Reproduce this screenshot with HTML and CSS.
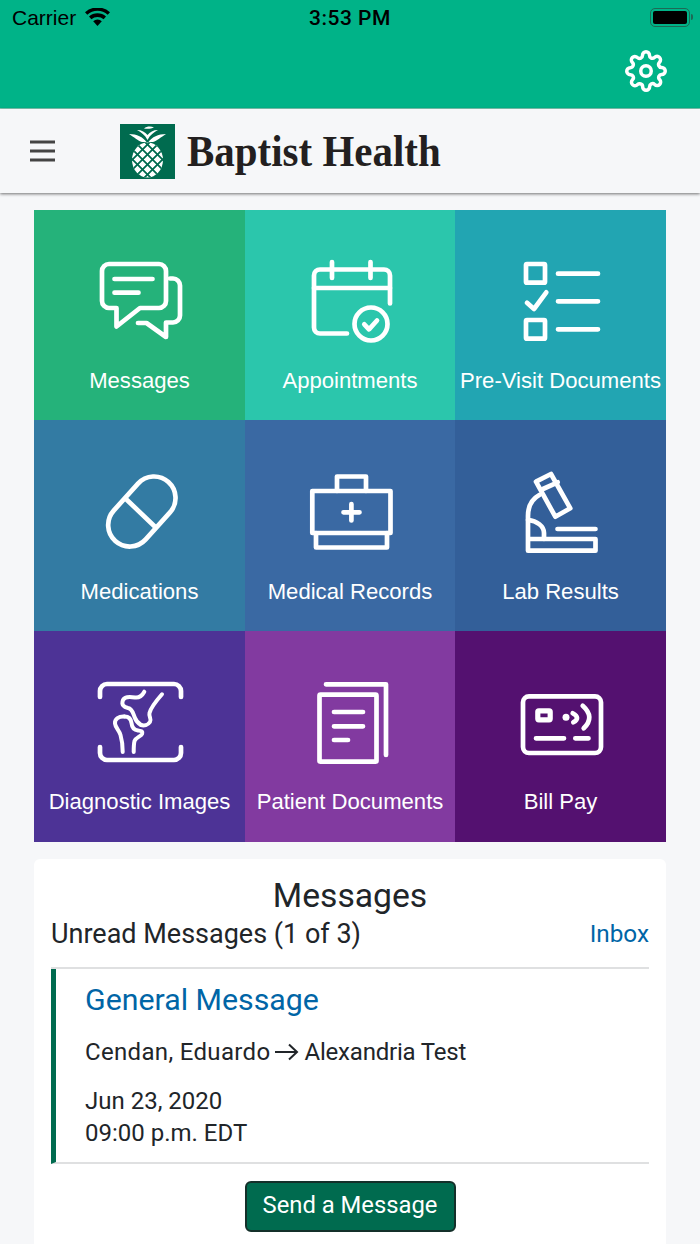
FILE: index.html
```html
<!DOCTYPE html>
<html>
<head>
    <title>Baptist Health</title>
    <link rel="stylesheet" href="styles.css">
</head>
<body>
    <header class="topbar">
        <div class="status">
            <div class="status-left">
                <span class="carrier">Carrier</span>
                <svg class="wifi" viewBox="0 0 25 18"><path d="M12.5 18 L8.2 13.2 A6.6 6.6 0 0 1 16.8 13.2 Z"/><path d="M6.4 11.2 L4 8.6 A12.6 12.6 0 0 1 21 8.6 L18.6 11.2 A9.2 9.2 0 0 0 6.4 11.2 Z"/><path d="M2.3 6.8 L0 4.3 A18.5 18.5 0 0 1 25 4.3 L22.7 6.8 A15.2 15.2 0 0 0 2.3 6.8 Z"/></svg>
            </div>
            <span class="clock">3:53 PM</span>
            <div class="battery"><div class="battery-fill"></div></div>
        </div>
        <div class="tools">
            <svg class="gear" viewBox="0 0 24 24"><circle cx="12" cy="12" r="3"/><path d="M19.4 15a1.65 1.65 0 0 0 .33 1.82l.06.06a2 2 0 0 1 0 2.83 2 2 0 0 1-2.83 0l-.06-.06a1.65 1.65 0 0 0-1.82-.33 1.65 1.65 0 0 0-1 1.51V21a2 2 0 0 1-2 2 2 2 0 0 1-2-2v-.09A1.65 1.65 0 0 0 9 19.4a1.65 1.65 0 0 0-1.82.33l-.06.06a2 2 0 0 1-2.83 0 2 2 0 0 1 0-2.83l.06-.06a1.65 1.65 0 0 0 .33-1.82 1.65 1.65 0 0 0-1.51-1H3a2 2 0 0 1-2-2 2 2 0 0 1 2-2h.09A1.65 1.65 0 0 0 4.6 9a1.65 1.65 0 0 0-.33-1.82l-.06-.06a2 2 0 0 1 0-2.83 2 2 0 0 1 2.83 0l.06.06a1.65 1.65 0 0 0 1.82.33H9a1.65 1.65 0 0 0 1-1.51V3a2 2 0 0 1 2-2 2 2 0 0 1 2 2v.09a1.65 1.65 0 0 0 1 1.51 1.65 1.65 0 0 0 1.82-.33l.06-.06a2 2 0 0 1 2.83 0 2 2 0 0 1 0 2.83l-.06.06a1.65 1.65 0 0 0-.33 1.82V9a1.65 1.65 0 0 0 1.51 1H21a2 2 0 0 1 2 2 2 2 0 0 1-2 2h-.09a1.65 1.65 0 0 0-1.51 1z"/></svg>
        </div>
    </header>

    <nav class="navbar">
        <svg class="burger" viewBox="0 0 25 22"><path d="M0 2 H25 M0 11 H25 M0 20 H25"/></svg>
        <svg class="logo-mark" viewBox="0 0 55 55">
            <clipPath id="fruit"><ellipse cx="27.5" cy="36" rx="15.5" ry="17.5"/></clipPath>
            <rect width="55" height="55" fill="#006b4f"/>
            <ellipse cx="27.5" cy="36" rx="15.5" ry="17.5" fill="#fff"/>
            <g clip-path="url(#fruit)" stroke="#006b4f" stroke-width="1.8">
                <path d="M4 27 L34 57 M4 17 L44 57 M12 15 L52 55 M22 15 L52 45"/>
                <path d="M51 27 L21 57 M51 17 L11 57 M43 15 L3 55 M33 15 L3 45"/>
            </g>
            <path fill="#fff" d="M26.5 18 C23 13 17 10 9 10 C14 13 18 17 22 18 Z M28.5 18 C32 13 38 10 46 10 C41 13 37 17 33 18 Z M27.5 16 C25 11 21 8 17 6 C22 6 25 8 27.5 11 C30 8 33 6 38 6 C34 8 30 11 27.5 16 Z M24 4.5 C27 2 31 2 34 3.5 C31 5 27 5 24 4.5 Z"/>
        </svg>
        <span class="logo-text">Baptist Health</span>
    </nav>

    <main class="content">
        <section class="tiles">
            <a class="tile t-messages">
                <svg class="icon" viewBox="50 45 110 110">
                    <path d="M81.5 98 H74 a7 7 0 0 1 -7 -7 V61 a7 7 0 0 1 7 -7 H124 a7 7 0 0 1 7 7 V91 a7 7 0 0 1 -7 7 H105 L81.5 116.5 Z"/>
                    <path d="M79.5 69 H117.5 M79.5 82.7 H103.5"/>
                    <path d="M135 68.5 h3 a7 7 0 0 1 7 7 V105.5 a7 7 0 0 1 -7 7 h-7 V127 L111.5 113 H103"/>
                </svg>
                <span class="tile-label">Messages</span>
            </a>
            <a class="tile t-appts">
                <svg class="icon" viewBox="50 45 110 110">
                    <path d="M102 123.5 H75 a6 6 0 0 1 -6 -6 V65.5 a6 6 0 0 1 6 -6 H139 a6 6 0 0 1 6 6 V93.5"/>
                    <path d="M69 78 H145 M87 52 V68 M125.5 52 V68"/>
                    <circle cx="126" cy="114" r="16.5"/>
                    <path d="M119.3 114.3 L124 119.3 L132 110.5"/>
                </svg>
                <span class="tile-label">Appointments</span>
            </a>
            <a class="tile t-previsit">
                <svg class="icon" viewBox="50 45 110 110">
                    <rect x="70" y="54" width="19" height="18.7" rx="1"/>
                    <rect x="70" y="110" width="19" height="18.7" rx="1"/>
                    <path d="M71 92.7 L78 99 L90.3 82.3"/>
                    <path d="M102 63.7 H142 M102 91.3 H142 M102 119.3 H142"/>
                </svg>
                <span class="tile-label">Pre-Visit Documents</span>
            </a>
            <a class="tile mid-row t-meds">
                <svg class="icon" viewBox="50 45 110 110">
                    <path d="M103 63.6 A21.5 21.5 0 0 1 135 92.4 L110.7 119.4 A21.5 21.5 0 0 1 78.7 90.6 Z"/>
                    <path d="M92 80 L120 106.7"/>
                </svg>
                <span class="tile-label">Medications</span>
            </a>
            <a class="tile mid-row t-records">
                <svg class="icon" viewBox="50 45 110 110">
                    <rect x="67.3" y="71" width="78.2" height="42"/>
                    <path d="M92 71 V56.5 H121 V71"/>
                    <path d="M71 113 V127.5 H142 V113"/>
                    <path d="M98.5 92.3 H114.5 M106.4 84 V100.5"/>
                </svg>
                <span class="tile-label">Medical Records</span>
            </a>
            <a class="tile mid-row t-labs">
                <svg class="icon" viewBox="50 45 110 110">
                    <path d="M80 61.7 L95 54 L114.3 88.3 L99.3 96.7 Z"/>
                    <path d="M87 69 L101.7 62.3"/>
                    <path d="M83.3 75 C76 79 72 87 72 96 V130.7 H139.5 V119 H72"/>
                    <path d="M72 100 C81 101 88 106 88 113 V119"/>
                    <path d="M101.5 109 H139.5"/>
                </svg>
                <span class="tile-label">Lab Results</span>
            </a>
            <a class="tile t-images">
                <svg class="icon" viewBox="50 45 110 110">
                    <path d="M65 66 V60 a7 7 0 0 1 7 -7 H139 a7 7 0 0 1 7 7 V66"/>
                    <path d="M65 116 V122 a7 7 0 0 0 7 7 H139 a7 7 0 0 0 7 -7 V116"/>
                    <g class="thin">
                        <path d="M109.3 60.7 C107 65 104 67 100 66.5 C95 65.5 90 65 88 69 C86 74 89 76 93 77 C98 78 98 83 100 87 C101 90 103 92 106 94"/>
                        <path d="M127 63.3 C122 69 116 76 114.5 82 C113.5 86 117 88 115 91 C113 94 109 95 106 94"/>
                        <path d="M89.5 85.5 C84 85 79.5 88 80 92.5 C80.5 97 84 99 85.5 104 C87 109 87.7 115 87.7 121"/>
                        <path d="M89.5 85.5 C94 85.5 96 88 96.5 92 C97 97 99 99 103 99.5 C106 100 108 100 107 103 C106 105.5 101 106 99.5 110 C98.7 113 98.7 117 98.7 121"/>
                    </g>
                </svg>
                <span class="tile-label">Diagnostic Images</span>
            </a>
            <a class="tile t-docs">
                <svg class="icon" viewBox="50 45 110 110">
                    <rect x="74.5" y="63.7" width="57" height="67" rx="1"/>
                    <path d="M81 53.3 H141 V124"/>
                    <path d="M89 81 H118 M89 95.3 H118 M89 109 H103"/>
                </svg>
                <span class="tile-label">Patient Documents</span>
            </a>
            <a class="tile t-bill">
                <svg class="icon" viewBox="50 45 110 110">
                    <rect x="67" y="65.3" width="78" height="56.7" rx="6"/>
                    <rect class="chip" x="81.8" y="79.8" width="12.4" height="9" rx="1"/>
                    <path d="M116.7 82.3 Q125 86.8 117.3 91.3"/>
                    <path d="M126.7 74.7 Q139.4 86 127.7 97.3"/>
                    <path d="M80 107.3 H108 M119.3 107.3 H132.5"/>
                    <circle class="solid" cx="110" cy="86.3" r="3.5"/>
                </svg>
                <span class="tile-label">Bill Pay</span>
            </a>
        </section>

        <section class="card">
            <h2 class="card-title">Messages</h2>
            <div class="card-head">
                <span>Unread Messages (1 of 3)</span>
                <a class="link">Inbox</a>
            </div>
            <div class="message">
                <h3 class="message-type">General Message</h3>
                <p class="message-people">
                    <span class="sender">Cendan, Eduardo</span>
                    <svg class="arrow" viewBox="0 0 24 18"><path d="M0 9 H22 M14 1.5 L22 9 L14 16.5"/></svg>
                    <span class="receiver">Alexandria Test</span>
                </p>
                <p class="message-date">Jun 23, 2020<br>09:00 p.m. EDT</p>
            </div>
            <div class="actions">
                <button class="send-btn">Send a Message</button>
            </div>
        </section>
    </main>
</body>
</html>
```
FILE: styles.css
```css
* {
    box-sizing: border-box;
}
html, body {
    margin: 0;
    height: 1244px;
    overflow: hidden;
}
body {
    font-family: Roboto, "Liberation Sans", sans-serif;
    background: #f6f7f9;
    color: #212529;
}

/* top green bar */
.topbar {
    height: 109px;
    background: #00b388;
    border-bottom: 1px solid #7fc9b4;
}
.status {
    height: 36px;
    padding: 0 10px 0 12px;
    display: flex;
    align-items: center;
    justify-content: space-between;
    color: #000;
    position: relative;
}
.status-left {
    display: flex;
    align-items: center;
    gap: 9px;
}
.carrier {
    font-family: "Liberation Sans", sans-serif;
    font-size: 21px;
}
.wifi {
    width: 25px;
    height: 18px;
    margin-top: -2px;
}
.clock {
    font-size: 21px;
    font-weight: 500;
    letter-spacing: 0.5px;
    position: absolute;
    left: 309px;
}
.battery {
    width: 40px;
    height: 19px;
    margin-top: -1px;
    border: 1.5px solid #1d6a55;
    border-radius: 5px;
    padding: 2px;
    position: relative;
}
.battery-fill {
    height: 100%;
    background: #000;
    border-radius: 2px;
}
.battery::after {
    content: "";
    position: absolute;
    right: -4px;
    top: 5px;
    width: 2px;
    height: 6px;
    background: #1d6a55;
    border-radius: 0 2px 2px 0;
}
.tools {
    display: flex;
    justify-content: flex-end;
    padding: 14px 33px 0 0;
}
.gear {
    width: 42px;
    height: 42px;
    fill: none;
    stroke: #fff;
    stroke-width: 2;
    stroke-linecap: round;
    stroke-linejoin: round;
}

/* logo bar */
.navbar {
    height: 84px;
    background: #f6f7f9;
    display: flex;
    align-items: center;
    padding-left: 30px;
    box-shadow: 0 1px 3px rgba(0, 0, 0, 0.55);
    position: relative;
}
.burger {
    width: 25px;
    height: 22px;
    fill: none;
    stroke: #444;
    stroke-width: 3;
    margin-right: 65px;
}
.logo-mark {
    width: 55px;
    height: 55px;
    margin-right: 12px;
    margin-top: 1px;
}
.logo-text {
    font-family: "Liberation Serif", serif;
    font-size: 45px;
    font-weight: 700;
    color: #231f20;
    transform: scaleX(0.91);
    transform-origin: left center;
    white-space: nowrap;
}

/* tile grid */
.content {
    padding: 17px 34px 0;
}
.tiles {
    display: grid;
    grid-template-columns: 211px 210px 211px;
    grid-template-rows: 210px 211px 211px;
}
.tile {
    padding-top: 45px;
    display: flex;
    flex-direction: column;
    align-items: center;
    color: #fff;
}
.icon {
    width: 110px;
    height: 110px;
    flex: none;
    fill: none;
    stroke: #fff;
    stroke-width: 4.7;
    stroke-linecap: round;
    stroke-linejoin: round;
}
.icon .thin {
    stroke-width: 4;
}
.icon .chip {
    stroke-width: 5.2;
}
.icon .solid {
    fill: #fff;
    stroke: none;
}
.tile-label {
    font-family: "Liberation Sans", sans-serif;
    font-size: 22.1px;
    line-height: 26px;
    margin-top: 3px;
    white-space: nowrap;
}
.mid-row .tile-label {
    margin-top: 4px;
}
.t-messages { background: #25b27a; }
.t-appts { background: #2bc6ac; }
.t-previsit { background: #22a5b2; }
.t-meds { background: #337ba3; }
.t-records { background: #3a69a3; }
.t-labs { background: #335f99; }
.t-images { background: #4d3396; }
.t-docs { background: #823aa0; }
.t-bill { background: #541170; }

/* messages card */
.card {
    margin-top: 17px;
    background: #fff;
    border-radius: 6px;
    padding: 17px 17px 60px;
}
.card-title {
    margin: 0;
    font-size: 33.7px;
    font-weight: 400;
    line-height: 40px;
    text-align: center;
}
.card-head {
    display: flex;
    justify-content: space-between;
    align-items: center;
    font-size: 27px;
    line-height: 36px;
    padding-bottom: 15px;
    border-bottom: 2px solid #dfe0e1;
}
.link {
    color: #0065a6;
    font-size: 24.3px;
}
.message {
    border-left: 5px solid #006b4f;
    border-bottom: 2px solid #dfe0e1;
    padding: 11px 0 13px 29px;
}
.message-type {
    margin: 0;
    font-size: 30.3px;
    font-weight: 400;
    line-height: 40px;
    color: #0065a6;
}
.message-people {
    margin: 16px 0 0;
    font-size: 24px;
    line-height: 32px;
    display: flex;
    align-items: center;
    gap: 5px;
}
.sender {
    letter-spacing: 0.33px;
}
.receiver {
    letter-spacing: -0.2px;
}
.arrow {
    width: 24px;
    height: 18px;
    fill: none;
    stroke: #212529;
    stroke-width: 2;
}
.message-date {
    margin: 17px 0 0;
    font-size: 24px;
    line-height: 32px;
}
.actions {
    display: flex;
    justify-content: center;
    padding-top: 17px;
}
.send-btn {
    width: 211px;
    height: 51px;
    padding: 0 0 3px;
    background: #006b4f;
    border: 2px solid #14302a;
    border-radius: 6px;
    color: #fff;
    font-family: Roboto, sans-serif;
    font-size: 23.8px;
    cursor: pointer;
}
```
